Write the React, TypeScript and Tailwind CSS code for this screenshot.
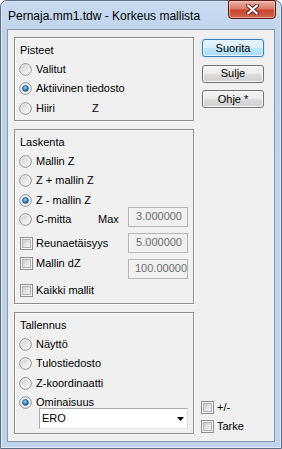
import React from 'react'

const Radio = ({ on }: { on?: boolean }) => (
  <svg width="13" height="13" viewBox="0 0 13 13" className="shrink-0">
    <defs>
      <linearGradient id="radioFill" x1="0" y1="0" x2="1" y2="1">
        <stop offset="0" stopColor="#cdcdcd" />
        <stop offset="1" stopColor="#ffffff" />
      </linearGradient>
      <radialGradient id="radioDot" cx="0.4" cy="0.35" r="0.75">
        <stop offset="0" stopColor="#9ad6f8" />
        <stop offset="0.6" stopColor="#2f7fc0" />
        <stop offset="1" stopColor="#174f86" />
      </radialGradient>
    </defs>
    <circle cx="6.5" cy="6.5" r="5.8" fill="#f6f6f6" stroke="#8d8d8d" strokeWidth="1" />
    <circle cx="6.5" cy="6.5" r="4.3" fill="url(#radioFill)" />
    {on && <circle cx="6.5" cy="6.5" r="2.9" fill="url(#radioDot)" stroke="#1c4f80" strokeWidth="0.7" />}
  </svg>
)

const Check = () => (
  <svg width="13" height="13" viewBox="0 0 13 13" className="shrink-0">
    <defs>
      <linearGradient id="checkFill" x1="0" y1="0" x2="1" y2="1">
        <stop offset="0" stopColor="#cbcbcb" />
        <stop offset="1" stopColor="#f7f7f7" />
      </linearGradient>
    </defs>
    <rect x="0.5" y="0.5" width="12" height="12" fill="#f5f5f5" stroke="#8e8f8f" />
    <rect x="2.5" y="2.5" width="8" height="8" fill="url(#checkFill)" stroke="#b3b3b3" />
  </svg>
)

const RadioRow = ({ label, on, w, children }: { label: string; on?: boolean; w?: string; children?: React.ReactNode }) => (
  <div className="flex h-[19.25px] items-center">
    <Radio on={on} />
    <span className={`ml-[4px] whitespace-nowrap ${w ?? ''}`}>{label}</span>
    {children}
  </div>
)

const CheckRow = ({ label, h }: { label: string; h: string }) => (
  <div className={`ml-px flex items-center ${h}`}>
    <Check />
    <span className="ml-[3px] whitespace-nowrap">{label}</span>
  </div>
)

const Btn = ({ label, primary }: { label: string; primary?: boolean }) => (
  <div
    className={
      primary
        ? 'flex h-[18px] w-[62px] items-center justify-center rounded-[3px] border border-[#3c7fb1] bg-[linear-gradient(#e8f5fc,#d8effc_50%,#bee6fd_50%,#a9dbf6)] shadow-[inset_0_0_0_1px_#e6f5fd,0_0_2px_#8fd0f3]'
        : 'flex h-[18px] w-[62px] items-center justify-center rounded-[3px] border border-[#707070] bg-[linear-gradient(#f2f2f2,#ebebeb_50%,#dddddd_50%,#cfcfcf)] shadow-[inset_0_0_0_1px_#fcfcfc]'
    }
  >
    {label}
  </div>
)

export default function App() {
  return (
    <div className="h-[449px] w-[282px] font-['Liberation_Sans',Arial,sans-serif] text-[11px] leading-none text-black">
      <div className="flex h-full w-full flex-col rounded-t-[7px] border border-[#5d6d85] bg-[linear-gradient(#c9dbf0,#bdd2eb_40px,#bfd3ec)] shadow-[inset_0_0_0_1px_#dfe9f6]">
        {/* title bar */}
        <div className="flex h-[28px] shrink-0 items-start">
          <span className="ml-[7px] mt-[7px] whitespace-nowrap text-[12px] leading-[16px]">
            Pernaja.mm1.tdw - Korkeus mallista
          </span>
          <div className="-mt-px ml-auto mr-[5px] flex h-[19px] w-[48px] items-center justify-center rounded-b-[4px] rounded-t-[2px] border border-[#5a1a10] bg-[linear-gradient(#eab2a5,#d97a66_45%,#c7452d_55%,#d2674d)] shadow-[inset_0_0_0_1px_rgba(255,220,210,0.55)]">
            <svg width="13" height="11" viewBox="0 0 13 11">
              <path d="M2 1.5L11 9.5M11 1.5L2 9.5" stroke="#5b1e16" strokeWidth="4" strokeLinecap="round" />
              <path d="M2 1.5L11 9.5M11 1.5L2 9.5" stroke="#ffffff" strokeWidth="2.2" strokeLinecap="round" />
            </svg>
          </div>
        </div>

        {/* client area */}
        <div className="mx-[6px] mb-[6px] flex flex-1 border border-[#8497b0] bg-[#f0f0f0] pb-[7px] pl-[6px] pt-[7px]">
          <div className="flex w-[180px] flex-col gap-[8px]">
            {/* Pisteet */}
            <div className="flex h-[84px] flex-col border border-[#8f8f8f] pl-[4px] pt-[2px] shadow-[inset_1px_1px_0_#ffffff,1px_1px_0_#ffffff]">
              <div className="ml-px flex h-5 items-center">Pisteet</div>
              <RadioRow label="Valitut" />
              <RadioRow label="Aktiivinen tiedosto" on />
              <RadioRow label="Hiiri" w="w-[56px]">
                <span>Z</span>
              </RadioRow>
            </div>

            {/* Laskenta */}
            <div className="flex h-[175px] flex-col border border-[#8f8f8f] pl-[4px] pr-[5px] pt-[2px] shadow-[inset_1px_1px_0_#ffffff,1px_1px_0_#ffffff]">
              <div className="ml-px flex h-5 items-center">Laskenta</div>
              <RadioRow label="Mallin Z" />
              <RadioRow label="Z + mallin Z" />
              <RadioRow label="Z - mallin Z" on />
              <div className="flex">
                <div className="flex flex-1 flex-col">
                  <RadioRow label="C-mitta" w="w-[62px]">
                    <span>Max</span>
                  </RadioRow>
                  <CheckRow label="Reunaetäisyys" h="mt-[5px] h-[19px]" />
                  <CheckRow label="Mallin dZ" h="mt-px h-[19px]" />
                  <CheckRow label="Kaikki mallit" h="mt-[8px] h-[19px]" />
                </div>
                <div className="-mt-[3px] flex w-[60px] flex-col gap-[6px] text-[#6d6d6d]">
                  <div className="flex h-[20px] items-center justify-end border border-[#b5b5b5] pr-[5px]">3.000000</div>
                  <div className="flex h-[20px] items-center justify-end border border-[#b5b5b5] pr-[5px]">5.000000</div>
                  <div className="flex h-[20px] items-center overflow-hidden whitespace-nowrap border border-[#b5b5b5] pl-[6px]">100.00000</div>
                </div>
              </div>
            </div>

            {/* Tallennus */}
            <div className="flex h-[122px] flex-col border border-[#8f8f8f] pl-[4px] pt-[2px] shadow-[inset_1px_1px_0_#ffffff,1px_1px_0_#ffffff]">
              <div className="ml-px flex h-5 items-center">Tallennus</div>
              <RadioRow label="Näyttö" />
              <RadioRow label="Tulostiedosto" />
              <RadioRow label="Z-koordinaatti" />
              <RadioRow label="Ominaisuus" on />
              <div className="-mt-[4px] ml-[20px] flex h-[21px] w-[149px] items-center justify-between border border-[#abadb3] border-b-[#e3e9ef] border-r-[#dbdfe6] bg-white pl-[2px] pr-[3px]">
                <span>ERO</span>
                <svg width="7" height="4" viewBox="0 0 7 4">
                  <path d="M0 0H7L3.5 4Z" fill="#000000" />
                </svg>
              </div>
            </div>
          </div>

          {/* buttons */}
          <div className="ml-[8px] flex w-[62px] flex-col">
            <div className="mt-[2px] flex flex-col gap-[7.5px]">
              <Btn label="Suorita" primary />
              <Btn label="Sulje" />
              <Btn label="Ohje *" />
            </div>
            <div className="-mb-[2px] -ml-[2px] mt-auto flex flex-col">
              <CheckRow label="+/-" h="h-[19px]" />
              <CheckRow label="Tarke" h="h-[19px]" />
            </div>
          </div>
        </div>
      </div>
    </div>
  )
}
